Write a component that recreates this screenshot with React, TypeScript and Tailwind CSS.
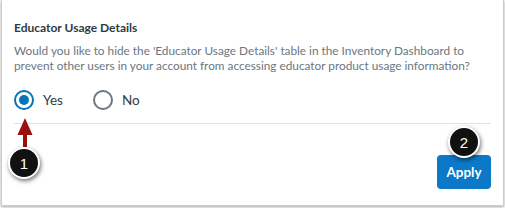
import React from "react";

function Badge({ n }: { n: string }) {
  return (
    <div className="flex h-[32px] w-[32px] items-center justify-center rounded-full border-2 border-white bg-[#111111] text-[15px] leading-none text-white shadow-[1px_2px_4px_rgba(0,0,0,0.55)] [font-family:'Liberation_Sans',Arial,sans-serif]">
      {n}
    </div>
  );
}

export default function App() {
  return (
    <div className="relative h-[208px] w-[505px] bg-white [font-family:Lato,'Liberation_Sans',sans-serif]">
      <div className="ml-[1px] h-[206px] w-[503px] border-x border-b border-[#c7cdd1] bg-white shadow-[0_1px_3px_rgba(0,0,0,0.35)]">
        <div className="px-[12px] pt-[20px]">
          <h2 className="text-[12px] font-bold leading-[16px] text-[#2d3b45]">Educator Usage Details</h2>
          <p className="mt-[7px] text-[11.8px] leading-[15px] text-[#6b7780]">
            Would you like to hide the 'Educator Usage Details' table in the Inventory Dashboard to prevent other users in your account from accessing educator product usage information?
          </p>
          <div className="mt-[17px] flex items-center gap-[30px]">
            <label className="flex items-center gap-[9px]">
              <span className="flex h-[20px] w-[20px] items-center justify-center rounded-full border-2 border-[#0374b5]">
                <span className="h-[10px] w-[10px] rounded-full bg-[#0374b5]" />
              </span>
              <span className="text-[13.5px] text-[#2d3b45]">Yes</span>
            </label>
            <label className="flex items-center gap-[9px]">
              <span className="h-[20px] w-[20px] rounded-full border-2 border-[#6b7780]" />
              <span className="text-[13.5px] text-[#2d3b45]">No</span>
            </label>
          </div>
          <div className="mt-[13px] border-t border-[#dfe3e6]" />
          <div className="flex justify-end pt-[31px]">
            <button className="h-[34px] w-[54px] rounded-[4px] bg-[#0b78c8] text-[13.5px] font-bold text-white">Apply</button>
          </div>
        </div>
      </div>

      {/* annotation arrow 1 */}
      <svg className="absolute left-[17px] top-[118px]" width="16" height="30" viewBox="0 0 16 30">
        <polygon points="8,0 15.5,17 0.5,17" fill="#9b0f0f" />
        <rect x="6" y="16" width="4" height="13" fill="#9b0f0f" />
      </svg>
      <div className="absolute left-[8px] top-[147px]">
        <Badge n="1" />
      </div>
      <div className="absolute left-[448px] top-[126px]">
        <Badge n="2" />
      </div>
    </div>
  );
}
